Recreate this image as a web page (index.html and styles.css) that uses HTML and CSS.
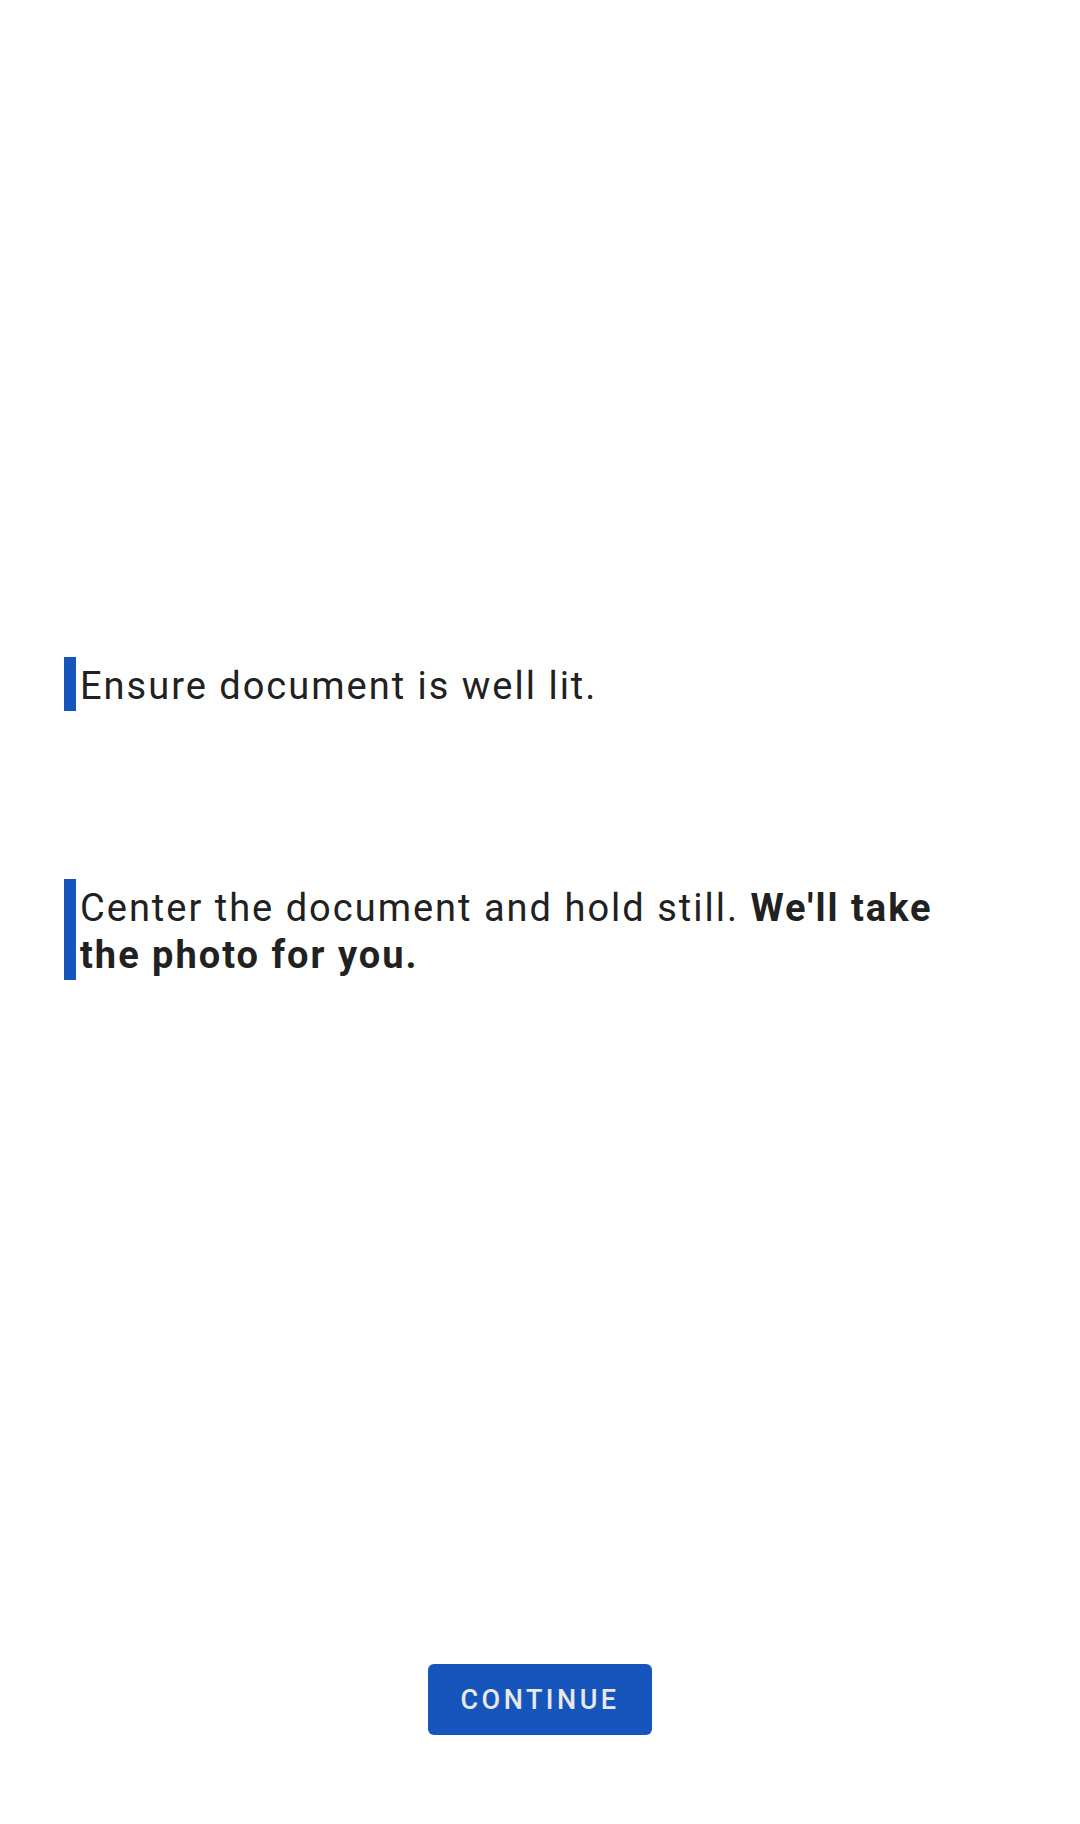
FILE: index.html
```html
<!DOCTYPE html>
<html lang="en">
<head>
<meta charset="utf-8">
<title>Document capture tips</title>
<link rel="stylesheet" href="styles.css">
</head>
<body>
<main class="screen">
  <section class="tips">
    <div class="tip tip-first">
      <span class="tip-bar"></span>
      <p class="tip-text">Ensure document is well lit.</p>
    </div>
    <div class="tip tip-second">
      <span class="tip-bar"></span>
      <p class="tip-text">Center the document and hold still. <strong>We'll take the photo for you.</strong></p>
    </div>
  </section>
  <div class="actions">
    <button class="btn-continue" type="button">CONTINUE</button>
  </div>
</main>
</body>
</html>
```
FILE: styles.css
```css
html, body {
  margin: 0;
  padding: 0;
  background: #ffffff;
}
.screen {
  width: 1080px;
  height: 1824px;
  display: flex;
  flex-direction: column;
  font-family: Roboto, "Noto Sans", sans-serif;
  color: #212121;
}
.tips {
  padding-top: 657px;
  padding-left: 64px;
  padding-right: 100px;
  flex: 1;
}
.tip {
  display: flex;
  align-items: stretch;
  gap: 4px;
}
.tip-second {
  margin-top: 168px;
}
.tip-bar {
  width: 12px;
  flex: none;
  background: #1655bb;
}
.tip-text {
  margin: 0;
  padding: 6px 0 1px;
  font-size: 38px;
  line-height: 47px;
  letter-spacing: 2px;
  max-width: 880px;
}
.tip-text strong {
  font-weight: 700;
}
.actions {
  display: flex;
  justify-content: center;
  padding-bottom: 89px;
}
.btn-continue {
  width: 224px;
  height: 71px;
  border: none;
  border-radius: 6px;
  background: #1655bb;
  color: #e8e8e8;
  font-family: Roboto, sans-serif;
  font-size: 27px;
  font-weight: 500;
  letter-spacing: 3.5px;
  padding: 0;
}
```
